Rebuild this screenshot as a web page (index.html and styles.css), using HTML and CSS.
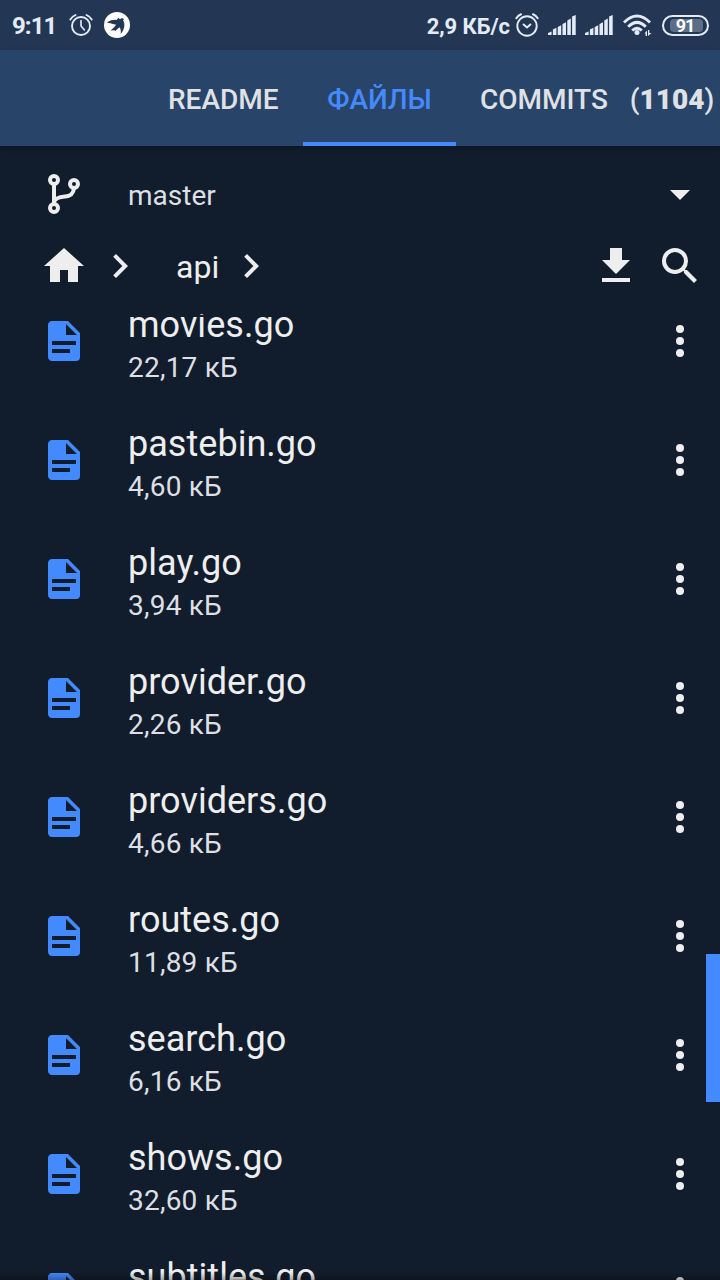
FILE: index.html
```html
<!DOCTYPE html>
<html lang="ru">
<head>
<meta charset="utf-8">
<title>Файлы</title>
<link rel="stylesheet" href="styles.css">
</head>
<body>
<svg class="defs" width="0" height="0">
  <symbol id="file" viewBox="0 0 24 24"><path d="M13,9H18.5L13,3.5V9M6,2H14L20,8V20A2,2 0 0,1 18,22H6C4.89,22 4,21.1 4,20V4C4,2.89 4.89,2 6,2M15,18V16H6V18H15M18,14V12H6V14H18Z"/></symbol>
  <symbol id="dots" viewBox="0 0 24 24"><circle cx="12" cy="6" r="2"/><circle cx="12" cy="12" r="2"/><circle cx="12" cy="18" r="2"/></symbol>
  <symbol id="chevron" viewBox="0 0 24 24"><path d="M10 6 8.59 7.41 13.17 12l-4.58 4.59L10 18l6-6z"/></symbol>
  <symbol id="signal" viewBox="0 0 28 20"><path d="M0 20v-2l3.600-1.500V20zM4.900 20v-5.500l3.500-1.800V20zM9.700 20v-8l3.500-1.800V20zM14.500 20V9l3.500-1.800V20zM19.300 20V5.500l3.500-2V20zM24.100 20V1.500L27.700 0v20z"/></symbol>
</svg>
<div class="screen">
  <header class="status">
    <span class="clock">9:11</span>
    <svg class="alarm" viewBox="0 0 24 24"><g fill="none" stroke="currentColor" stroke-linecap="round"><circle cx="12" cy="13" r="9" stroke-width="1.900"/><path d="M12 7.500V13l3.400 4" stroke-width="1.600"/><path d="M1.300 6.500Q3 3.500 6.500 2M22.700 6.500Q21 3.500 17.500 2" stroke-width="1.900"/></g></svg>
    <svg class="bird" viewBox="0 0 26 26"><circle cx="13" cy="13" r="13" fill="#fff"/><path class="bird-shape" d="M2.800 10.600C6 8.300 9.500 7.700 12.800 7.900L14.200 5.800 16 7.300C17 6.200 18.600 5.900 20.300 7.300L18.900 8.100C21.500 12 20.700 17.500 16.700 22 17 18.800 16.700 16.800 15.500 15.200 13.300 16.900 12.300 18.300 10.800 19.200L10.600 17.900 6.600 18.700 8.800 16.400C10.300 15.400 11.200 14.300 12 12.600 8.800 12.700 6.200 10.900 2.800 10.600Z"/></svg>
    <span class="speed">2,9 КБ/с</span>
    <svg class="alarm next" viewBox="0 0 24 24"><g fill="none" stroke="currentColor" stroke-linecap="round"><circle cx="12" cy="13" r="9.700" stroke-width="1.900"/><path d="m8.600 11.500 3.400 3 3.400-3" stroke-width="2"/><path d="M1.300 5.200Q3 2.500 6 1.300M22.700 5.200Q21 2.500 18 1.300" stroke-width="2"/></g></svg>
    <svg class="signal"><use href="#signal"/></svg>
    <svg class="signal second"><use href="#signal"/></svg>
    <svg class="wifi" viewBox="0 0 29 23"><g fill="none" stroke="currentColor" stroke-width="2.900"><path d="M1 8.500Q14 -4.500 27 8.500M5.200 12.700Q14 4 22.800 12.700M9.200 16.500Q14 12 18.800 16.500"/></g><circle cx="14" cy="18.500" r="2.500"/><path d="M21.500 19.500 24 16.500V22h-1.400v-2.500zM25 16h1.300v3H28.500L25 22z"/></svg>
    <span class="battery"><span class="charge">91</span></span>
  </header>
  <nav class="tabs">
    <span class="tab readme">README</span>
    <span class="tab active">ФАЙЛЫ</span>
    <span class="tab commits">COMMITS <span class="count">(<b>1104</b>)</span></span>
  </nav>
  <section class="branch">
    <svg class="icon" viewBox="0 0 24 24"><g fill="none" stroke="currentColor" stroke-width="2"><circle cx="7" cy="5" r="2"/><circle cx="7" cy="19" r="2"/><circle cx="17" cy="7" r="2"/><path d="M7 7v10M17 9c-.3 3.200-2 4-4.500 4.200C10 13.400 7.600 13.800 7 16"/></g></svg>
    <span class="branch-name">master</span>
    <svg class="icon" viewBox="0 0 24 24"><path d="m7 10 5 5 5-5z"/></svg>
  </section>
  <section class="path">
    <svg class="icon" viewBox="0 0 24 24"><path d="M10 20v-6h4v6h5v-8h3L12 3 2 12h3v8z"/></svg>
    <svg class="icon sep"><use href="#chevron"/></svg>
    <span class="folder">api</span>
    <svg class="icon"><use href="#chevron"/></svg>
    <svg class="icon download" viewBox="0 0 24 24"><path d="M19 9h-4V3H9v6H5l7 7zM5 18v2h14v-2z"/></svg>
    <svg class="icon" viewBox="0 0 24 24"><path d="M15.500 14h-.790l-.280-.270A6.471 6.471 0 0 0 16 9.500 6.500 6.500 0 1 0 9.500 16c1.610 0 3.090-.590 4.230-1.570l.270.280v.790l5 4.990L20.490 19zM9.500 14a4.500 4.500 0 1 1 0-9 4.500 4.500 0 0 1 0 9z"/></svg>
  </section>
  <main class="files">
    <div class="file"><svg class="icon doc"><use href="#file"/></svg><div class="info"><div class="name">movies.go</div><div class="size">22,17 кБ</div></div><svg class="icon"><use href="#dots"/></svg></div>
    <div class="file"><svg class="icon doc"><use href="#file"/></svg><div class="info"><div class="name">pastebin.go</div><div class="size">4,60 кБ</div></div><svg class="icon"><use href="#dots"/></svg></div>
    <div class="file"><svg class="icon doc"><use href="#file"/></svg><div class="info"><div class="name">play.go</div><div class="size">3,94 кБ</div></div><svg class="icon"><use href="#dots"/></svg></div>
    <div class="file"><svg class="icon doc"><use href="#file"/></svg><div class="info"><div class="name">provider.go</div><div class="size">2,26 кБ</div></div><svg class="icon"><use href="#dots"/></svg></div>
    <div class="file"><svg class="icon doc"><use href="#file"/></svg><div class="info"><div class="name">providers.go</div><div class="size">4,66 кБ</div></div><svg class="icon"><use href="#dots"/></svg></div>
    <div class="file"><svg class="icon doc"><use href="#file"/></svg><div class="info"><div class="name">routes.go</div><div class="size">11,89 кБ</div></div><svg class="icon"><use href="#dots"/></svg></div>
    <div class="file"><svg class="icon doc"><use href="#file"/></svg><div class="info"><div class="name">search.go</div><div class="size">6,16 кБ</div></div><svg class="icon"><use href="#dots"/></svg></div>
    <div class="file"><svg class="icon doc"><use href="#file"/></svg><div class="info"><div class="name">shows.go</div><div class="size">32,60 кБ</div></div><svg class="icon"><use href="#dots"/></svg></div>
    <div class="file"><svg class="icon doc"><use href="#file"/></svg><div class="info"><div class="name">subtitles.go</div></div><svg class="icon"><use href="#dots"/></svg></div>
    <div class="scrollbar"></div>
    <div class="fade"></div>
  </main>
</div>
</body>
</html>
```
FILE: styles.css
```css
* { box-sizing: border-box; }
body { margin: 0; background: #111d2c; }
.defs { display: block; position: absolute; }
svg { display: block; flex: none; fill: currentColor; }
.screen {
  width: 720px;
  height: 1280px;
  overflow: hidden;
  display: flex;
  flex-direction: column;
  background: #111d2c;
  color: #eeeeef;
  font-family: Roboto, "Noto Sans", sans-serif;
  white-space: nowrap;
}
.status {
  flex: none;
  height: 50px;
  display: flex;
  align-items: center;
  padding: 0 11px 0 12px;
  background: #233755;
  color: #e4ebf7;
}
.clock { width: 57px; font-size: 24px; font-weight: 700; line-height: 50px; padding-top: 2px; letter-spacing: -.9px; }
.alarm { width: 24px; height: 24px; margin-bottom: 1px; }
.bird { width: 26px; height: 26px; margin-left: 11px; }
.bird-shape { fill: #233755; }
.speed { margin-left: auto; font-size: 22px; font-weight: 700; line-height: 50px; padding-top: 3px; letter-spacing: -.05px; }
.next { margin-left: 5px; }
.signal { width: 28px; height: 20px; margin-left: 9px; }
.second { margin-left: 9px; }
.wifi { width: 29px; height: 23px; margin-left: 10px; }
.battery {
  width: 47px;
  height: 21px;
  margin-left: 10px;
  padding: 2px 4px 2px 6px;
  border: 2px solid #e4ebf7;
  border-radius: 11px;
}
.charge {
  display: block;
  height: 13px;
  padding-right: 3px;
  border-radius: 4px;
  background: #5d6e89;
  color: #fff;
  font-size: 18px;
  font-weight: 700;
  line-height: 13px;
  letter-spacing: -1px;
  text-align: center;
}
.tabs {
  flex: none;
  height: 96px;
  display: flex;
  background: #294469;
  color: #dfe1e4;
  font-size: 28px;
  font-weight: 500;
  line-height: 100px;
  box-shadow: 0 2px 5px rgba(0, 0, 0, .3);
}
.readme { width: 303px; padding-left: 168px; }
.active { width: 153px; text-align: center; color: #448aff; border-bottom: 4px solid #448aff; }
.commits { padding-left: 24px; }
.count { margin-left: 15px; }
.count b { font-weight: 900; }
.icon { width: 48px; height: 48px; }
.branch { flex: none; height: 72px; margin-top: 24px; padding: 0 16px 0 40px; display: flex; }
.branch-name { flex: 1; padding-left: 40px; font-size: 28px; line-height: 52px; color: #dedfe2; }
.path { flex: none; height: 72px; padding: 0 16px 0 40px; display: flex; }
.sep { margin-left: 8px; }
.folder { width: 83px; padding-left: 32px; font-size: 32px; line-height: 51px; }
.download { margin-left: auto; margin-right: 16px; }
.files { position: relative; flex: 1; min-height: 0; overflow: hidden; }
.file { height: 119px; padding: 3px 16px 0 40px; display: flex; }
.doc { color: #448aff; }
.info { flex: 1; padding-left: 40px; }
.name { height: 34px; margin-top: -13px; font-size: 36px; line-height: 42px; letter-spacing: .03px; }
.size { margin-top: 13px; font-size: 28px; line-height: 34px; letter-spacing: .22px; color: #dedfe2; }
.scrollbar { position: absolute; right: 0; top: 640px; width: 14px; height: 148px; background: #448aff; }
.fade { position: absolute; left: 0; right: 0; bottom: 0; height: 8px; background: linear-gradient(transparent, rgba(0, 0, 0, .3)); }
```
